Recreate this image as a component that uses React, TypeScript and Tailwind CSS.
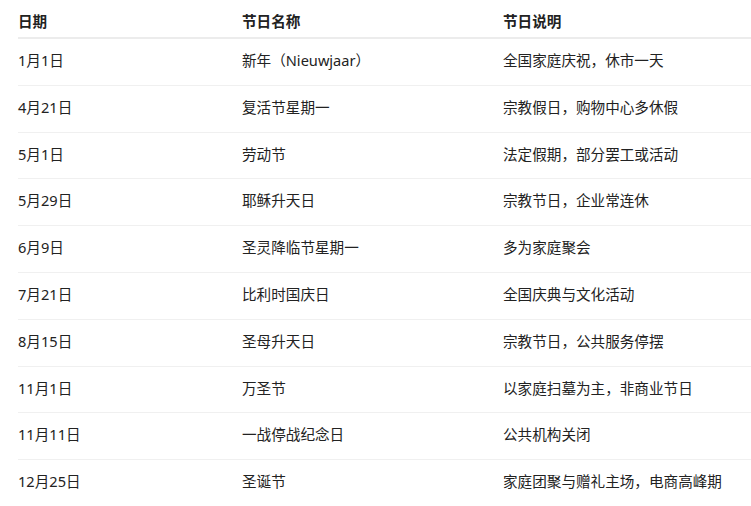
import React from "react";

const rows = [
  ["1月1日", "新年（Nieuwjaar）", "全国家庭庆祝，休市一天"],
  ["4月21日", "复活节星期一", "宗教假日，购物中心多休假"],
  ["5月1日", "劳动节", "法定假期，部分罢工或活动"],
  ["5月29日", "耶稣升天日", "宗教节日，企业常连休"],
  ["6月9日", "圣灵降临节星期一", "多为家庭聚会"],
  ["7月21日", "比利时国庆日", "全国庆典与文化活动"],
  ["8月15日", "圣母升天日", "宗教节日，公共服务停摆"],
  ["11月1日", "万圣节", "以家庭扫墓为主，非商业节日"],
  ["11月11日", "一战停战纪念日", "公共机构关闭"],
  ["12月25日", "圣诞节", "家庭团聚与赠礼主场，电商高峰期"],
];

export default function App() {
  return (
    <div className="w-[751px] h-[506px] overflow-hidden bg-white pl-[18px] font-['Noto_Sans','Noto_Sans_CJK_SC',sans-serif] text-[14.6px] text-[#222]">
      <div className="grid grid-cols-[224px_261px_1fr] h-[39px] border-b-2 border-[#ececec] font-bold">
        <div className="pt-[10px] leading-[22px]">日期</div>
        <div className="pt-[10px] leading-[22px]">节日名称</div>
        <div className="pt-[10px] leading-[22px]">节日说明</div>
      </div>
      {rows.map((r) => (
        <div key={r[0]} className="grid grid-cols-[224px_261px_1fr] h-[46.8px] border-b border-[#f0f0f0] items-center pb-[2px]">
          <div>{r[0]}</div>
          <div>{r[1]}</div>
          <div className="whitespace-nowrap">{r[2]}</div>
        </div>
      ))}
    </div>
  );
}
